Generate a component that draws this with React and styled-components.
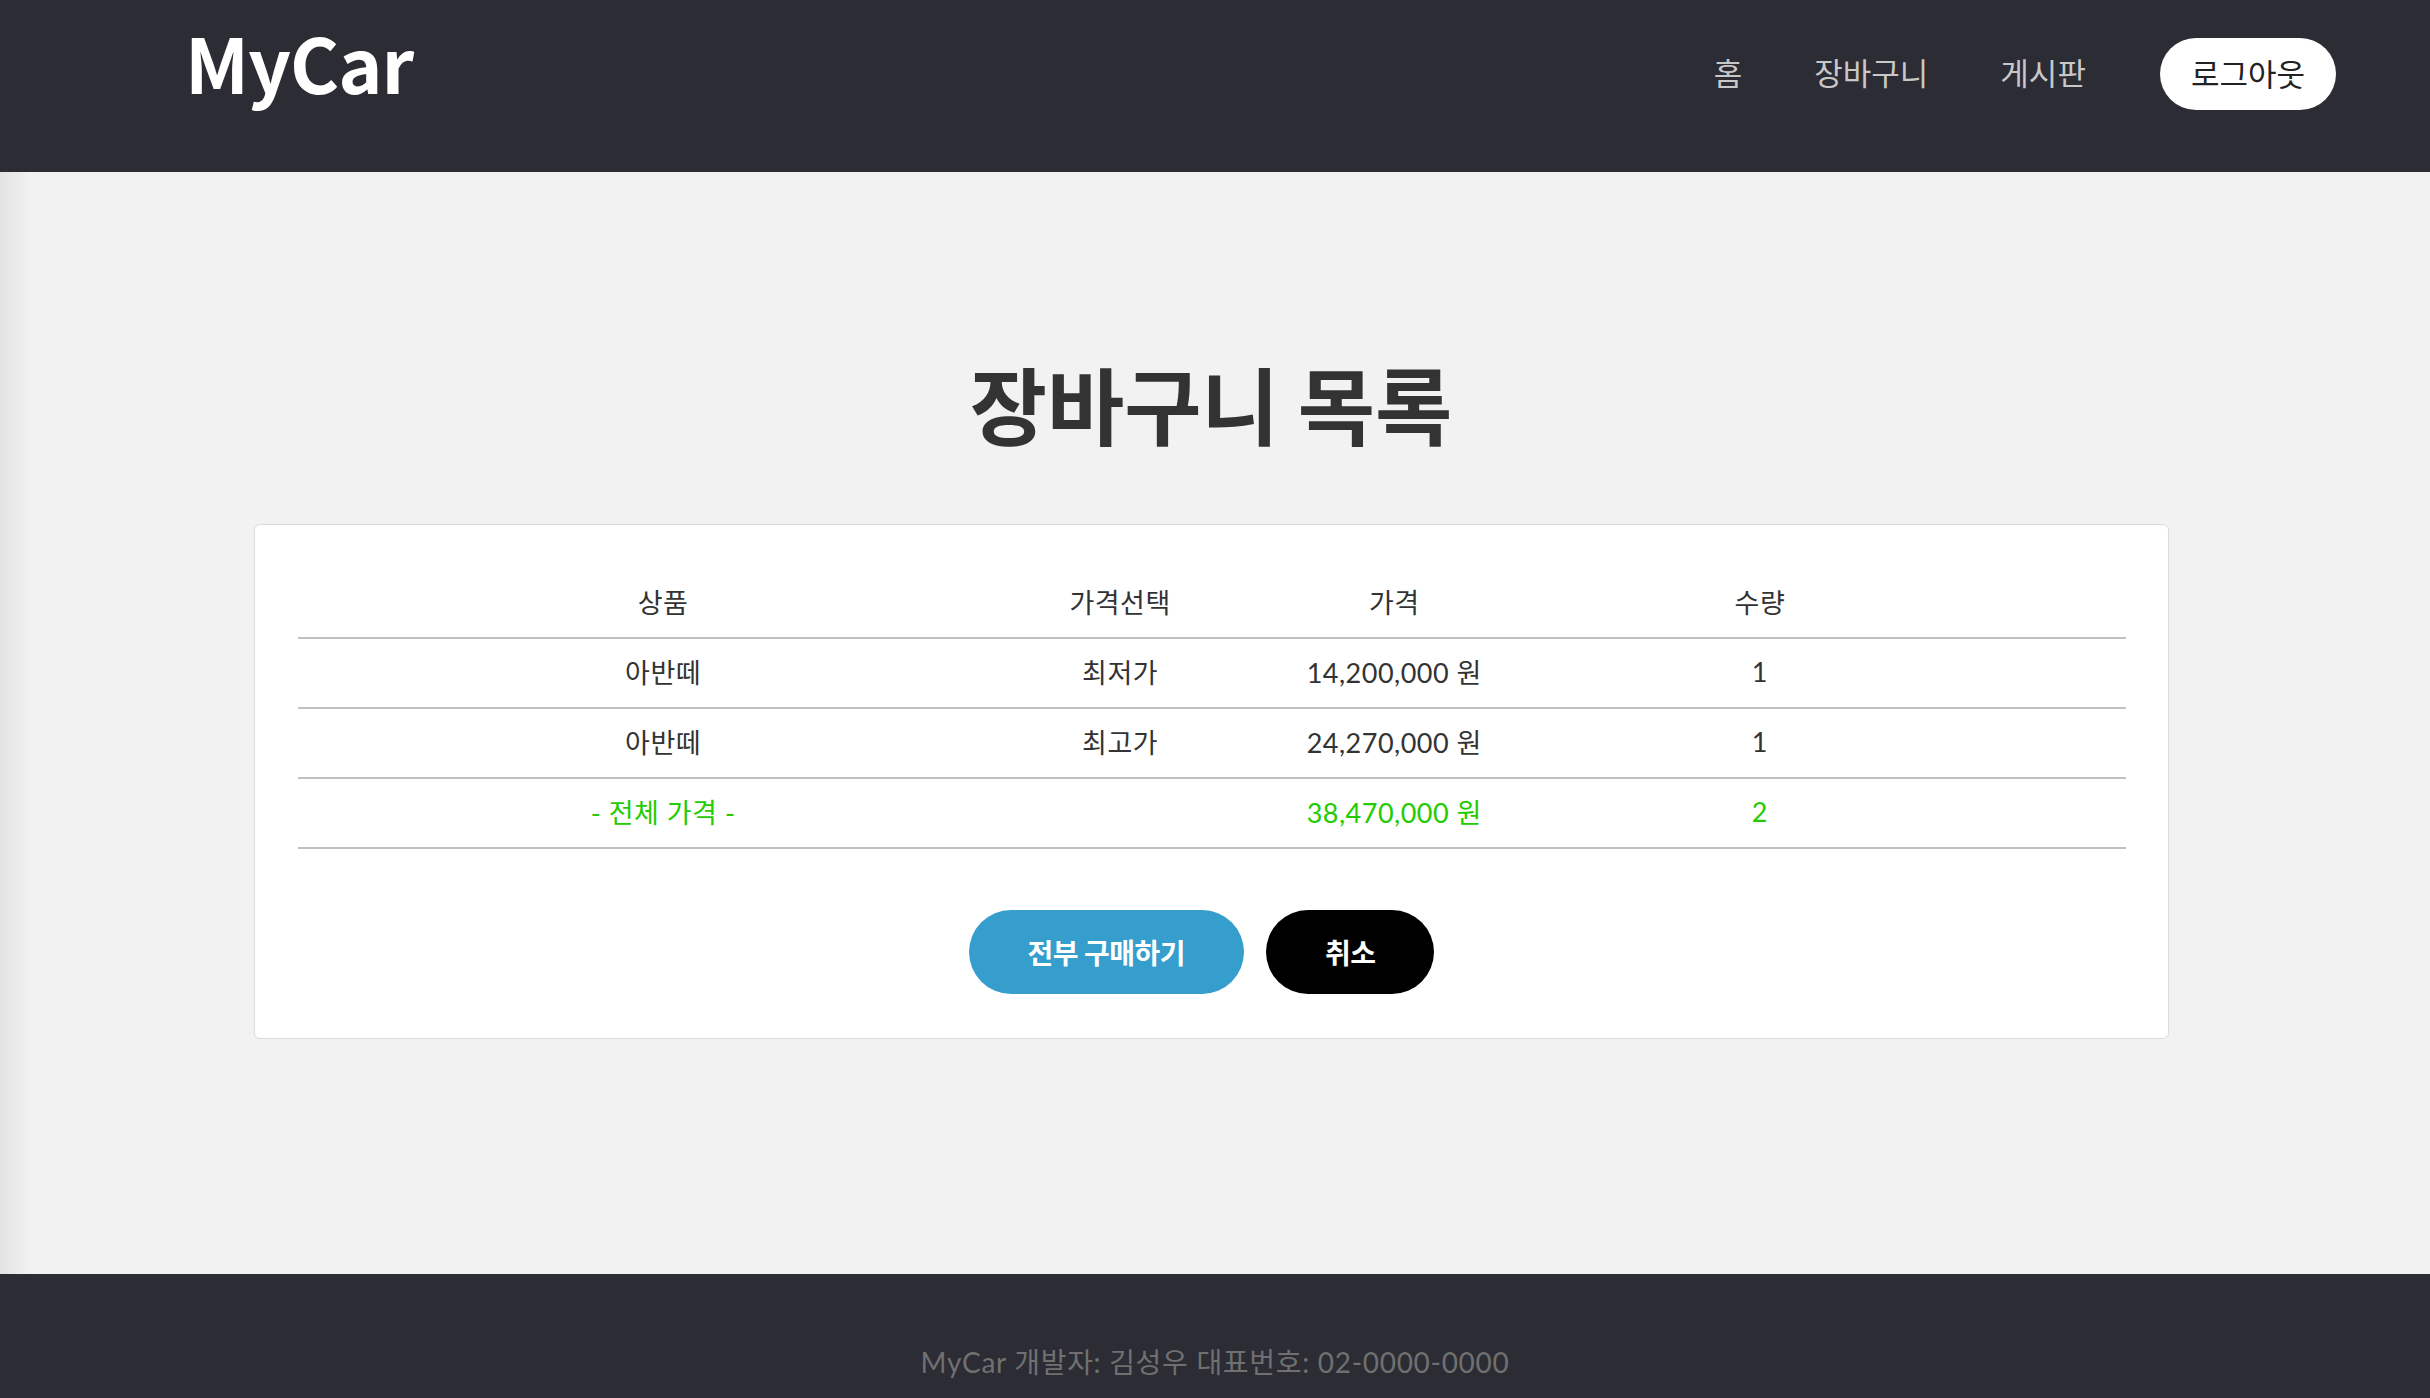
import React from "react"
import styled, { createGlobalStyle } from "styled-components"

const GlobalStyle = createGlobalStyle`
  html, body {
    margin: 0;
    padding: 0;
  }
  body {
    font-family: Lato, "Noto Sans CJK KR", sans-serif;
    color: #333;
  }
  * {
    box-sizing: border-box;
  }
`

const Page = styled.div`
  display: flex;
  flex-direction: column;
  min-height: 100vh;
`

const Header = styled.header`
  display: flex;
  justify-content: space-between;
  align-items: flex-start;
  height: 172px;
  padding: 24px 94px 0 185px;
  background-color: #2b2c34;
`

const Logo = styled.h1`
  margin: 0;
  font-family: "Noto Sans CJK KR", sans-serif;
  font-size: 75px;
  font-weight: 700;
  line-height: 1;
  letter-spacing: -1px;
  color: #fff;
`

const Nav = styled.nav`
  display: flex;
  align-items: center;
  gap: 72px;
  margin-top: 14px;
`

const NavLink = styled.a`
  padding-bottom: 6px;
  font-family: "Noto Sans CJK KR", sans-serif;
  font-size: 31px;
  color: #c8c8c8;
  text-decoration: none;
`

const LogoutButton = styled.button`
  height: 72px;
  padding: 0 31px 4px;
  margin-left: 2px;
  border: none;
  border-radius: 36px;
  background-color: #fff;
  font-family: "Noto Sans CJK KR", sans-serif;
  font-size: 31px;
  color: #222;
`

const Main = styled.main`
  flex: 1;
  padding: 189px 8px 235px 0;
  background: linear-gradient(90deg, #e3e3e3 0, #f2f2f2 32px);
`

const Title = styled.h2`
  margin: 0 0 79px;
  text-align: center;
  font-family: "Noto Sans CJK KR", sans-serif;
  font-size: 84px;
  font-weight: 700;
  line-height: 1;
  color: #333;
`

const Card = styled.section`
  width: 1915px;
  margin: 0 auto;
  padding: 44px 42px 44px 43px;
  background-color: #fff;
  border: 1px solid #dcdcdc;
  border-radius: 6px;
`

const Row = styled.div`
  display: grid;
  grid-template-columns: 4fr 1fr 2fr 2fr 1fr;
  align-items: center;
  height: 70px;
  border-bottom: 2px solid #c0c0c0;
  color: ${(p) => (p.total ? "#22cc00" : "#333")};
`

const Cell = styled.div`
  padding-bottom: 3px;
  text-align: center;
  font-size: 27px;
  letter-spacing: 0.5px;
`

const Buttons = styled.div`
  display: flex;
  justify-content: center;
  gap: 22px;
  margin-top: 61px;
  padding-right: 20px;
`

const PillButton = styled.button`
  height: 84px;
  padding: 0 59px;
  border: none;
  border-radius: 42px;
  background-color: ${(p) => (p.dark ? "#000" : "#359ecc")};
  font-family: "Noto Sans CJK KR", sans-serif;
  font-size: 28px;
  font-weight: 700;
  letter-spacing: -0.5px;
  color: #fff;
`

const Footer = styled.footer`
  height: 160px;
  padding-top: 67px;
  background-color: #2b2c34;
  text-align: center;
  font-size: 28px;
  letter-spacing: 0.7px;
  color: #707070;
`

const items = [
  { name: "아반떼", option: "최저가", price: "14,200,000 원", qty: "1" },
  { name: "아반떼", option: "최고가", price: "24,270,000 원", qty: "1" },
]

const App = () => {
  return (
    <Page>
      <GlobalStyle />
      <Header>
        <Logo>MyCar</Logo>
        <Nav>
          <NavLink href="#">홈</NavLink>
          <NavLink href="#">장바구니</NavLink>
          <NavLink href="#">게시판</NavLink>
          <LogoutButton>로그아웃</LogoutButton>
        </Nav>
      </Header>
      <Main>
        <Title>장바구니 목록</Title>
        <Card>
          <Row>
            <Cell>상품</Cell>
            <Cell>가격선택</Cell>
            <Cell>가격</Cell>
            <Cell>수량</Cell>
            <Cell />
          </Row>
          {items.map((item, index) => {
            return (
              <Row key={index}>
                <Cell>{item.name}</Cell>
                <Cell>{item.option}</Cell>
                <Cell>{item.price}</Cell>
                <Cell>{item.qty}</Cell>
                <Cell />
              </Row>
            )
          })}
          <Row total>
            <Cell>- 전체 가격 -</Cell>
            <Cell />
            <Cell>38,470,000 원</Cell>
            <Cell>2</Cell>
            <Cell />
          </Row>
          <Buttons>
            <PillButton>전부 구매하기</PillButton>
            <PillButton dark>취소</PillButton>
          </Buttons>
        </Card>
      </Main>
      <Footer>MyCar 개발자: 김성우 대표번호: 02-0000-0000</Footer>
    </Page>
  )
}

export default App
